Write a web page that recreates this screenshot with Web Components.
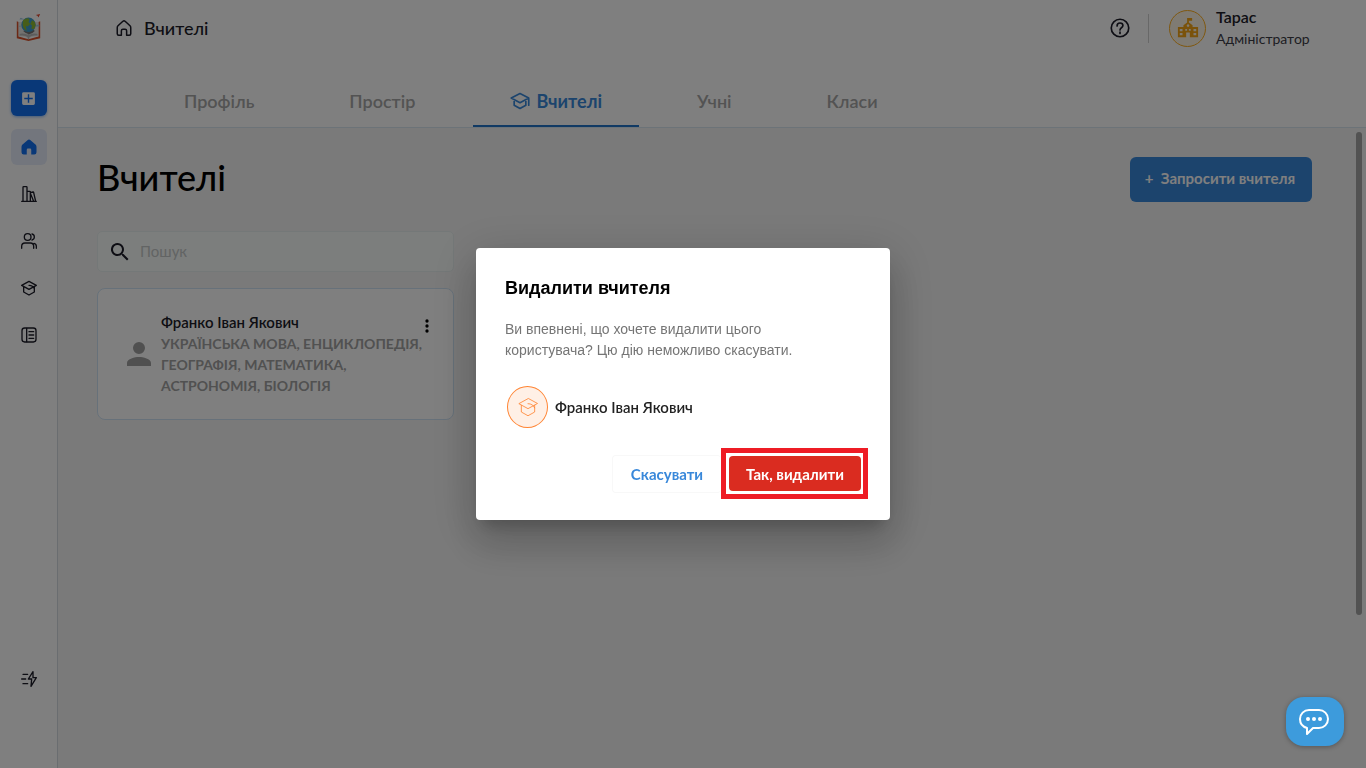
<!DOCTYPE html>
<html lang="uk">
<head>
<meta charset="utf-8">
<meta name="viewport" content="width=device-width, initial-scale=1">
<title>Вчителі</title>
<style>
  body {
    margin: 0;
    font-family: Lato, "Open Sans", sans-serif;
    color: #1c1c28;
    --blue: #3988da;
    --line: #d9e6f0;
  }
</style>
</head>
<body>
<school-app></school-app>

<script>
const icons = {
  logo: `<path d="M2 8v19l13 3 13-3V8l-2 1v16l-11 3-11-3V9z" fill="#d9532c"/><path d="M4 9q8-1 11 3 3-4 11-3v16q-7-1-11 2-4-3-11-2z" fill="#e9e6e2"/><path d="M15 16v11M6 23q5-1 9 2 4-3 9-2" stroke="#bbb" fill="none"/><path d="M9 19q7 7 13 0l-4-4z" fill="#777"/><circle cx="15" cy="12" r="8" fill="#3f9fd0"/><path d="M9 7q5-4 7-1l-1 3 2 2-3 3-2-1 1 6q-6-4-4-12zM19 7l3 2 1 4-2 4-3-1 1-3-2-2z" fill="#8fbb32"/><path d="M5 6q1-3 3-1 2 0 2 1zM24 12h3v2h-4zM5 13h2v1H4z" fill="#9fc9df"/><path d="M23 1l5-1-2 4-1-2z" fill="#e3472d"/>`,
  plus: `<path fill="currentColor" fill-rule="evenodd" d="M5 3h14q2 0 2 2v14q0 2-2 2H5q-2 0-2-2V5q0-2 2-2zm6 3v5H6v2h5v5h2v-5h5v-2h-5V6z"/>`,
  homeFill: `<path fill="currentColor" d="M12 2q-1 0-2 1L3 9q-1 1-1 3v7q0 3 3 3h4v-6q0-2 1-2h4q1 0 1 2v6h4q3 0 3-3v-7q0-2-1-3l-7-6q-1-1-2-1z"/>`,
  home: `<path d="M8.500 21.500H5q-2 0-2-2v-8q0-1.500 1-2.500l6.500-6q1.500-1 3 0L20 9q1 1 1 2.500v8q0 2-2 2h-3.500v-6q0-2-2-2h-3q-2 0-2 2z"/>`,
  books: `<path d="M1 23h22M3 23V2q0-1 1-1h4q1 0 1 1v21M9 8h4q1 0 1 1v14M14 10l4-1q1 0 1 1l3 13M14 11l5 12"/>`,
  users: `<circle cx="10" cy="6" r="5"/><path d="M16.500 1.500q3.500 1 3.500 4.500t-3.500 4.500M1 23v-3q0-5 5-5h8q5 0 5 5v3M19.500 15.500q3.500 1 3.500 4.500v3"/>`,
  cap: `<path d="M12 2L1 8l11 6 11-6zM4 10v8l8 4.500 8-4.500v-8M12 8q3 0 5 1.500t3 3.500"/>`,
  capTab: `<path d="M12 3L1.500 8.500 12 14l10.500-5.500zM5 10.500V17l7 4 7-4v-6.500M22.500 9v8"/>`,
  panel: `<rect x="1.500" y="1.500" width="21" height="21" rx="4"/><path d="M8.500 2v20M12 7h7M12 12h7M12 17h7"/>`,
  bolt: `<path d="M3 5h7M1 12h6M3 19h7M18 1l-7 11h5l-1 11 8-13h-5z"/>`,
  help: `<circle cx="12" cy="12" r="10.500"/><path d="M8.500 9.500Q8.500 6 12 6t3.500 3q0 1.500-1.750 2.750T12 14.500M12 17v1.500"/>`,
  school: `<path fill="currentColor" fill-rule="evenodd" d="M12 1h4.500v3H13v2l4 3v2h6v11h-9v-5h-4v5H1V11h6V9l4-3V1zm0 7a1.400 1.400 0 1 0 .1 0zM3 13v2.500h3V13zm6 0v2h2v-2zm4 0v2h2v-2zm5 0v2.500h3V13zM3 17.500V20h3v-2.500zm15 0V20h3v-2.500z"/>`,
  search: `<path fill="currentColor" d="M15.500 14h-.8l-.3-.3a6.500 6.500 0 1 0-.7.7l.3.3v.8l5 5 1.500-1.500zm-6 0a4.500 4.500 0 1 1 0-9 4.500 4.500 0 0 1 0 9z"/>`,
  person: `<path fill="currentColor" d="M12 12a4 4 0 1 0 0-8 4 4 0 0 0 0 8zm0 2c-2.700 0-8 1.300-8 4v2h16v-2c0-2.700-5.300-4-8-4z"/>`,
  dots: `<g fill="currentColor"><circle cx="12" cy="6" r="2"/><circle cx="12" cy="12" r="2"/><circle cx="12" cy="18" r="2"/></g>`,
};

class UiIcon extends HTMLElement {
  constructor() {
    super();
    this.attachShadow({ mode: 'open' });
  }

  connectedCallback() {
    const name = this.getAttribute('name');
    const size = this.getAttribute('size') || 18;
    const weight = this.getAttribute('weight') || 2;
    const filled = ['logo', 'plus', 'homeFill', 'school', 'search', 'person', 'dots'].includes(name);
    const box = name === 'logo' ? '0 0 30 30' : '0 0 24 24';
    this.shadowRoot.innerHTML = `
    <style>
      :host { display: inline-flex; flex: none; }
      svg { display: block; overflow: visible; }
    </style>
    <svg width="${size}" height="${size}" viewBox="${box}" aria-hidden="true" fill="none"
      stroke="${filled ? 'none' : 'currentColor'}" stroke-width="${weight}"
      stroke-linejoin="round" stroke-linecap="round">${icons[name]}</svg>
    `;
  }
}
customElements.define('ui-icon', UiIcon);

class SideBar extends HTMLElement {
  constructor() {
    super();
    this.attachShadow({ mode: 'open' });
    this.shadowRoot.innerHTML = `
    <style>
      :host {
        display: flex;
        flex-direction: column;
        align-items: center;
        width: 58px;
        padding: 14px 0 71px;
        box-sizing: border-box;
        border-right: 1px solid #d5dbe0;
        flex: none;
        background: #fff;
      }
      nav {
        display: flex;
        flex-direction: column;
        gap: 11px;
        margin-top: 39px;
        flex: 1;
      }
      a {
        display: flex;
        align-items: center;
        justify-content: center;
        width: 36px;
        height: 36px;
        border-radius: 6px;
        color: #1c1c28;
      }
      a.add {
        background: #1270f0;
        color: #fff;
        margin-bottom: 2px;
        box-shadow: 0 1px 3px rgba(18, 112, 240, .5);
      }
      a.active {
        background: #e6edfa;
        color: #1270f0;
      }
      a.last { margin-top: auto; }
    </style>
    <ui-icon name="logo" size="27"></ui-icon>
    <nav aria-label="Меню">
      <a class="add" href="#add" aria-label="Додати"><ui-icon name="plus" size="17"></ui-icon></a>
      <a class="active" href="#home" aria-label="Головна"><ui-icon name="homeFill"></ui-icon></a>
      <a href="#library" aria-label="Бібліотека"><ui-icon name="books" size="16"></ui-icon></a>
      <a href="#people" aria-label="Користувачі"><ui-icon name="users" size="16"></ui-icon></a>
      <a href="#teachers" aria-label="Вчителі"><ui-icon name="cap" size="16"></ui-icon></a>
      <a href="#journal" aria-label="Журнал"><ui-icon name="panel" size="16"></ui-icon></a>
      <a class="last" href="#quick" aria-label="Швидкі дії"><ui-icon name="bolt" size="16"></ui-icon></a>
    </nav>
    `;
  }
}
customElements.define('side-bar', SideBar);

class TopBar extends HTMLElement {
  constructor() {
    super();
    this.attachShadow({ mode: 'open' });
    this.shadowRoot.innerHTML = `
    <style>
      :host { display: block; background: #fff; }
      header {
        display: flex;
        align-items: center;
        height: 56px;
        padding: 0 54px 0 57px;
      }
      .crumb {
        display: flex;
        align-items: center;
        gap: 11px;
        flex: 1;
        font-size: 18px;
        font-weight: 500;
        color: inherit;
        text-decoration: none;
      }
      .help {
        display: flex;
        padding: 0;
        border: 0;
        background: none;
        color: inherit;
      }
      .user {
        display: flex;
        align-items: center;
        gap: 10px;
        margin-left: 18px;
      }
      .user::before {
        content: "";
        width: 1px;
        height: 29px;
        margin-right: 10px;
        background: #d0d0d0;
      }
      .avatar {
        display: flex;
        align-items: center;
        justify-content: center;
        width: 35px;
        height: 35px;
        border: 1px solid #ffb020;
        border-radius: 50%;
        background: #fff6e6;
        color: #f5a516;
      }
      .name { min-width: 96px; }
      b, small { display: block; line-height: 22px; }
      b { font-size: 16px; font-weight: 600; }
      small { font-size: 14px; color: #3c3c46; }
    </style>
    <header>
      <a class="crumb" href="#home"><ui-icon name="home" size="18"></ui-icon>Вчителі</a>
      <button class="help" aria-label="Довідка"><ui-icon name="help" size="20"></ui-icon></button>
      <div class="user">
        <span class="avatar"><ui-icon name="school" size="22"></ui-icon></span>
        <div class="name"><b>Тарас</b><small>Адміністратор</small></div>
      </div>
    </header>
    `;
  }
}
customElements.define('top-bar', TopBar);

class TabBar extends HTMLElement {
  constructor() {
    super();
    this.attachShadow({ mode: 'open' });
    this.shadowRoot.innerHTML = `
    <style>
      :host { display: block; background: #fff; }
      nav {
        display: flex;
        gap: 21px;
        height: 50px;
        padding: 21px 0 0 89px;
        border-bottom: 1px solid var(--line);
      }
      a {
        display: flex;
        align-items: center;
        gap: 6px;
        padding: 0 37px;
        border-bottom: 2px solid transparent;
        font-size: 18px;
        font-weight: 600;
        color: #a6a6a6;
        text-decoration: none;
      }
      a[aria-current] {
        color: var(--blue);
        font-weight: 700;
        border-color: #2274c8;
      }
    </style>
    <nav aria-label="Розділи">
      <a href="#profile">Профіль</a>
      <a href="#space">Простір</a>
      <a href="#teachers" aria-current="page"><ui-icon name="capTab" size="20"></ui-icon>Вчителі</a>
      <a href="#pupils">Учні</a>
      <a href="#classes">Класи</a>
    </nav>
    `;
  }
}
customElements.define('tab-bar', TabBar);

class TeacherCard extends HTMLElement {
  constructor() {
    super();
    this.attachShadow({ mode: 'open' });
    this.shadowRoot.innerHTML = `
    <style>
      :host {
        display: flex;
        align-items: center;
        gap: 4px;
        min-height: 132px;
        padding: 0 16px 0 23px;
        box-sizing: border-box;
        border: 1px solid #cfe3f5;
        border-radius: 8px;
        background: #fff;
      }
      ui-icon { color: #a0a0a0; }
      .info { flex: 1; padding-bottom: 2px; }
      h2 {
        margin: 0;
        font-size: 15px;
        font-weight: 600;
        line-height: 22px;
      }
      p {
        margin: 0 -16px 0 0;
        font-size: 14px;
        font-weight: 700;
        line-height: 21px;
        color: #a2a2a2;
      }
      button {
        align-self: flex-start;
        display: flex;
        margin-top: 27px;
        padding: 0;
        border: 0;
        background: none;
      }
      button ui-icon { color: #000; }
    </style>
    <ui-icon name="person" size="36"></ui-icon>
    <div class="info">
      <h2><slot name="name"></slot></h2>
      <p><slot></slot></p>
    </div>
    <button aria-label="Дії"><ui-icon name="dots" size="20"></ui-icon></button>
    `;
  }
}
customElements.define('teacher-card', TeacherCard);

class TeachersPage extends HTMLElement {
  constructor() {
    super();
    this.attachShadow({ mode: 'open' });
    this.shadowRoot.innerHTML = `
    <style>
      :host { display: flex; flex: 1; background: #f5f5f5; }
      main { flex: 1; padding: 29px 44px 0 39px; }
      .title {
        display: flex;
        align-items: flex-start;
        justify-content: space-between;
      }
      h1 { margin: 0; font-size: 36px; font-weight: 500; line-height: 40px; color: #000; }
      .title button {
        height: 45px;
        padding: 0 17px 3px 15px;
        border: 0;
        border-radius: 6px;
        background: var(--blue);
        color: #fff;
        font: 700 15px Lato, sans-serif;
        white-space: pre;
      }
      .list {
        display: flex;
        flex-direction: column;
        gap: 16px;
        max-width: 357px;
        margin-top: 29px;
      }
      label {
        display: flex;
        align-items: center;
        gap: 8px;
        height: 41px;
        padding: 0 10px;
        box-sizing: border-box;
        border: 1px solid #e9f0f0;
        border-radius: 5px;
        background: #f9fdfb;
      }
      input {
        flex: 1;
        min-width: 0;
        padding: 0 0 2px;
        border: 0;
        background: none;
        font: 15px Lato, sans-serif;
      }
      input::placeholder { color: #c4c8c8; }
      .scroll { width: 10px; padding-top: 4px; }
      .scroll div {
        width: 6px;
        height: 76%;
        border-radius: 3px;
        background: #a4a4a4;
      }
    </style>
    <main>
      <div class="title">
        <h1>Вчителі</h1>
        <button>+  Запросити вчителя</button>
      </div>
      <div class="list">
        <label><ui-icon name="search" size="24"></ui-icon><input type="search" placeholder="Пошук" aria-label="Пошук"></label>
        <teacher-card>
          <span slot="name">Франко Іван Якович</span>
          УКРАЇНСЬКА МОВА, ЕНЦИКЛОПЕДІЯ, ГЕОГРАФІЯ, МАТЕМАТИКА, АСТРОНОМІЯ, БІОЛОГІЯ
        </teacher-card>
      </div>
    </main>
    <div class="scroll"><div></div></div>
    `;
  }
}
customElements.define('teachers-page', TeachersPage);

class ConfirmDialog extends HTMLElement {
  constructor() {
    super();
    this.attachShadow({ mode: 'open' });
    this.shadowRoot.innerHTML = `
    <style>
      :host {
        position: fixed;
        inset: 0;
        display: flex;
        align-items: center;
        justify-content: center;
        background: rgba(0, 0, 0, .5);
      }
      section {
        width: 414px;
        padding: 29px 22px 21px 29px;
        box-sizing: border-box;
        border-radius: 4px;
        background: #fff;
        box-shadow: 0 11px 15px -7px rgba(0, 0, 0, .2), 0 24px 38px 3px rgba(0, 0, 0, .14), 0 9px 46px 8px rgba(0, 0, 0, .12);
      }
      h2 {
        margin: 0 0 20px;
        font: 700 18px/22px "Liberation Sans", sans-serif;
        color: #000;
      }
      p {
        max-width: 320px;
        margin: 0 0 25px;
        font: 14px/21px "Liberation Sans", sans-serif;
        color: #757575;
      }
      .person {
        display: flex;
        align-items: center;
        gap: 7px;
        margin: 0 0 20px 2px;
        font-size: 15px;
        font-weight: 600;
        color: #222;
      }
      .person span {
        display: flex;
        align-items: center;
        justify-content: center;
        width: 39px;
        height: 40px;
        border: 1px solid #ff8433;
        border-radius: 50%;
        background: #fff0e6;
        color: #ff8433;
      }
      footer {
        display: flex;
        justify-content: flex-end;
      }
      button {
        border-radius: 4px;
        font: 700 15px Lato, sans-serif;
      }
      .cancel {
        align-self: center;
        width: 109px;
        height: 38px;
        border: 1px solid #f8f8f8;
        border-right: 0;
        background: #fff;
        color: var(--blue);
      }
      .mark {
        border: 5px solid #ee1c25;
        padding: 3px 2px 3px 3px;
      }
      .confirm {
        display: block;
        width: 132px;
        height: 35px;
        border: 0;
        background: #da2c20;
        color: #fff;
      }
    </style>
    <section role="dialog" aria-modal="true" aria-labelledby="title">
      <h2 id="title">Видалити вчителя</h2>
      <p>Ви впевнені, що хочете видалити цього користувача? Цю дію неможливо скасувати.</p>
      <div class="person"><span><ui-icon name="cap" size="20" weight="1"></ui-icon></span><slot></slot></div>
      <footer>
        <button class="cancel">Скасувати</button>
        <div class="mark"><button class="confirm">Так, видалити</button></div>
      </footer>
    </section>
    `;
  }
}
customElements.define('confirm-dialog', ConfirmDialog);

class ChatButton extends HTMLElement {
  constructor() {
    super();
    this.attachShadow({ mode: 'open' });
    this.shadowRoot.innerHTML = `
    <style>
      :host { position: fixed; right: 22px; bottom: 22px; }
      button {
        display: flex;
        align-items: center;
        justify-content: center;
        width: 58px;
        height: 49px;
        padding: 0 2px 0 0;
        border: 0;
        border-radius: 18px;
        background: #3d9bdc;
        box-shadow: 0 1px 5px rgba(0, 0, 0, .3);
      }
    </style>
    <button aria-label="Чат">
      <svg width="32" height="28" viewBox="0 0 32 28" fill="none" stroke="#fff" stroke-width="2" stroke-linejoin="round">
        <path d="M11 2h10a9 9 0 0 1 0 18h-6l-6 6v-6q-7-2-7-9a9 9 0 0 1 9-9z"/>
        <g fill="#fff" stroke="none"><circle cx="10" cy="11" r="2"/><circle cx="16" cy="11" r="2"/><circle cx="22" cy="11" r="2"/></g>
      </svg>
    </button>
    `;
  }
}
customElements.define('chat-button', ChatButton);

class SchoolApp extends HTMLElement {
  constructor() {
    super();
    this.attachShadow({ mode: 'open' });
    this.shadowRoot.innerHTML = `
    <style>
      :host { display: flex; min-height: 100vh; }
      .content {
        display: flex;
        flex-direction: column;
        flex: 1;
        min-width: 0;
      }
    </style>
    <side-bar></side-bar>
    <div class="content">
      <top-bar></top-bar>
      <tab-bar></tab-bar>
      <teachers-page></teachers-page>
    </div>
    <confirm-dialog>Франко Іван Якович</confirm-dialog>
    <chat-button></chat-button>
    `;
  }
}
customElements.define('school-app', SchoolApp);
</script>
</body>
</html>
